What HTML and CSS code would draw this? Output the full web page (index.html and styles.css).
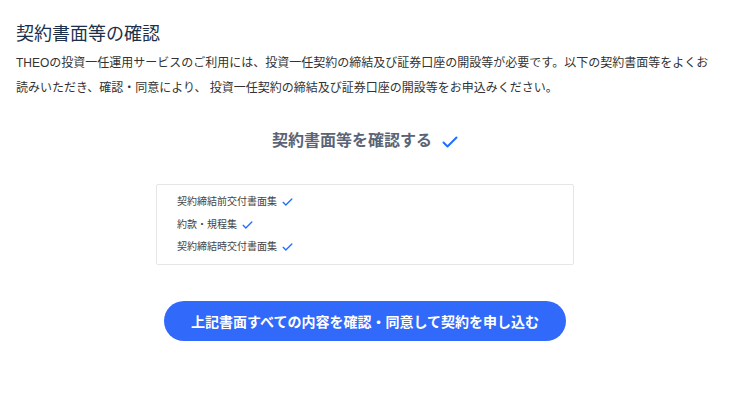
FILE: index.html
```html
<!DOCTYPE html>
<html lang="ja">
<head>
    <meta charset="UTF-8">
    <meta name="viewport" content="width=device-width, initial-scale=1.0">
    <title>契約書面等の確認</title>
    <link rel="stylesheet" href="styles.css">
</head>
<body>
    <div class="container">
        <h1>契約書面等の確認</h1>
        <p class="lead">THEOの投資一任運用サービスのご利用には、投資一任契約の締結及び証券口座の開設等が必要です。以下の契約書面等をよくお読みいただき、確認・同意により、 投資一任契約の締結及び証券口座の開設等をお申込みください。</p>

        <div class="confirm-title">
            <span>契約書面等を確認する</span>
            <svg class="check check-lg" viewBox="0 0 16 12"><path d="M1.5 6.5 L5.5 10.5 L14.5 1.5"/></svg>
        </div>

        <div class="doc-box">
            <div class="doc"><span>契約締結前交付書面集</span><svg class="check" viewBox="0 0 16 12"><path d="M1.5 6.5 L5.5 10.5 L14.5 1.5"/></svg></div>
            <div class="doc"><span>約款・規程集</span><svg class="check" viewBox="0 0 16 12"><path d="M1.5 6.5 L5.5 10.5 L14.5 1.5"/></svg></div>
            <div class="doc"><span>契約締結時交付書面集</span><svg class="check" viewBox="0 0 16 12"><path d="M1.5 6.5 L5.5 10.5 L14.5 1.5"/></svg></div>
        </div>

        <div class="actions">
            <button class="apply">上記書面すべての内容を確認・同意して契約を申し込む</button>
        </div>
    </div>
</body>
</html>
```

FILE: styles.css
```css
body {
    font-family: "Liberation Sans", "Noto Sans CJK JP", sans-serif;
    background-color: #fff;
    color: #333;
    margin: 0;
    padding: 0;
}

.container {
    padding: 0 16px;
}

h1 {
    font-size: 18px;
    font-weight: normal;
    line-height: 26px;
    color: #1d3049;
    margin: 21px 0 0;
}

.lead {
    font-size: 12px;
    line-height: 25px;
    color: #333;
    margin: 4px 0 0;
}

.confirm-title {
    display: flex;
    justify-content: center;
    align-items: center;
    gap: 8px;
    margin-top: 28px;
    font-size: 16px;
    font-weight: bold;
    line-height: 24px;
    color: #5b6476;
}

.check {
    width: 11px;
    height: 8px;
    fill: none;
    stroke: #1f6fff;
    stroke-width: 2;
    stroke-linecap: round;
    stroke-linejoin: round;
    margin-left: 5px;
    flex-shrink: 0;
}

.check-lg {
    width: 16px;
    height: 12px;
    margin-left: 2px;
    margin-top: 1px;
}

.doc-box {
    width: 418px;
    box-sizing: border-box;
    margin: 31px auto 0;
    padding: 6px 20px 5px;
    border: 1px solid #e6e6e6;
    border-radius: 2px;
}

.doc {
    display: flex;
    align-items: center;
    font-size: 10px;
    line-height: 22.5px;
    color: #444;
}

.actions {
    display: flex;
    justify-content: center;
    margin-top: 36px;
}

.apply {
    width: 402px;
    height: 40px;
    border: none;
    border-radius: 20px;
    background-color: #3169fb;
    color: #fff;
    font-family: inherit;
    font-size: 14px;
    font-weight: bold;
    cursor: pointer;
}
```
